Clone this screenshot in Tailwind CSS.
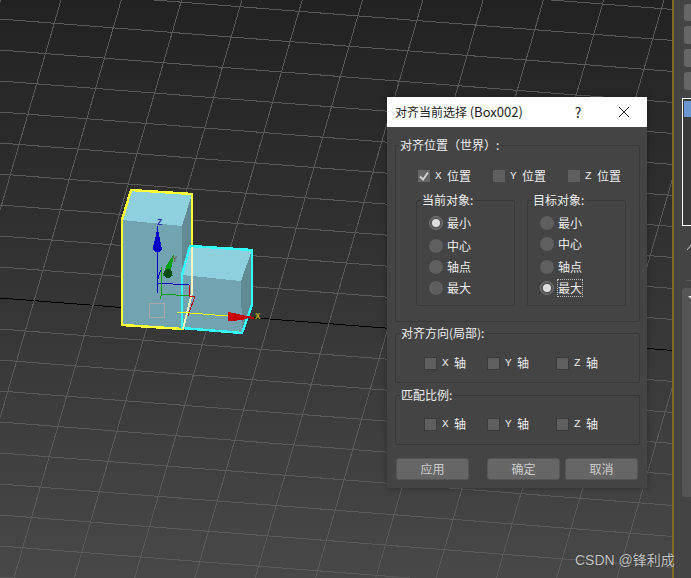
<!DOCTYPE html>
<html lang="zh">
<head>
    <meta charset="UTF-8">
    <title>对齐当前选择</title>
    <script src="https://cdn.jsdelivr.net/npm/@tailwindcss/browser@4"></script>
</head>
<body class="w-[691px] h-[578px] overflow-hidden bg-[#444444] font-['Noto_Sans_CJK_SC',sans-serif] text-[12px] leading-4">
<div class="flex h-full">
    <!-- viewport -->
    <div class="relative w-[672px] h-full shrink-0 overflow-hidden bg-linear-to-b from-[#222222] to-[#484848]">
        <svg id="grid" class="absolute inset-0" width="672" height="578" shape-rendering="crispEdges"></svg>
        <svg class="absolute inset-0" width="672" height="578" shape-rendering="crispEdges" fill="none">
            <!-- yellow box -->
            <polygon points="122,220 182,226 182,329 122,325" fill="#72a3b0"/>
            <polygon points="131,190 192,194 182,226 122,220" fill="#8fd0de"/>
            <polygon points="192,194 182,226 182,329 192,293" fill="#628a94"/>
            <polygon points="122,220 131,190 192,194 192,293 183,329 122,325" stroke="#ffff33" stroke-width="2.500"/>
            <!-- cyan box -->
            <polygon points="182,275 241,281 242,333 182,328" fill="#72a3b0"/>
            <polygon points="190,246 252,250 241,281 182,275" fill="#8fd0de"/>
            <polygon points="252,250 241,281 242,333 252,305" fill="#628a94"/>
            <polygon points="182,275 190,246 252,250 252,305 242,333 182,328" stroke="#33ffff" stroke-width="2.500"/>
            <path d="M192 247V293L183 329" stroke="#f8f4c0" stroke-width="2"/>
            <!-- gizmo -->
            <rect x="149.500" y="303" width="14.500" height="14.500" stroke="#a8a8a8"/>
            <path d="M157.500 250V293M157 282L160.500 270M157.500 283L189 285" stroke="#0000c0"/>
            <path d="M157.500 226L159 235L162 249L160 252H155L152.500 249L156 235Z" fill="#0000c8"/>
            <text x="157" y="225" font-family="Liberation Mono" font-weight="700" font-size="9" fill="#3030b0">Z</text>
            <path d="M161.500 267V294L160 299M162 294L189 296" stroke="#00a000"/>
            <path d="M174 254L171 270L173 276H163L166 266Z" fill="#00a000"/>
            <circle cx="168" cy="273.500" r="4.500" fill="#0a4a0a"/>
            <text x="172" y="262" font-family="Liberation Mono" font-weight="700" font-size="9" fill="#707060">Y</text>
            <path d="M189 285V296M189 296H195L188 316" stroke="#c00000"/>
            <path d="M177 312L228 316" stroke="#ffff00"/>
            <path d="M228 312L234 313L247 316V319L234 321H228Z" fill="#c80000"/>
            <path d="M247 317L254 318" stroke="#c00000" stroke-width="2"/>
            <text x="255" y="319" font-family="Liberation Mono" font-weight="700" font-size="9" fill="#b8b020">X</text>
        </svg>

        <!-- dialog -->
        <div class="absolute left-[387px] top-[97px] w-[260px] h-[391px] bg-[#444444] shadow-[0_0_6px_rgba(0,0,0,0.3)]">
            <div class="flex items-center h-[30px] bg-white pl-2 text-[#1a1a1a]">
                <span class="w-[177px]">对齐当前选择 <span class="text-[13px]">(Box002)</span></span>
                <span class="w-[12px] text-[14px] text-center">?</span>
                <svg class="ml-[34px]" width="12" height="12" viewBox="0 0 12 12" fill="none" stroke="#222" stroke-width="1"><path d="M1 1L11 11M11 1L1 11"/></svg>
            </div>
            <div class="pl-2 pt-[10px] text-[#eeeeee]">
                <fieldset class="w-[245px] h-[185px] border border-[#383838] rounded-[2px]">
                    <legend class="ml-[3px] px-[1px]">对齐位置（世界）:</legend>
                    <div class="flex pt-[15px] pl-[22px]">
                        <div class="flex items-center w-[75px]">
                            <span class="flex items-center justify-center w-3 h-3 bg-[#666666] mr-[5px]">
                                <svg width="12" height="12" viewBox="0 0 12 12" fill="none" stroke="#d0d0d0" stroke-width="2"><path d="M2 6.500L5 9.500L10 2.500"/></svg>
                            </span>
                            <span class="w-3 text-[11px] font-['Liberation_Mono',monospace]">X</span>位置
                        </div>
                        <div class="flex items-center w-[75px]">
                            <span class="w-3 h-3 bg-[#5f5f5f] mr-[5px]"></span>
                            <span class="w-3 text-[11px] font-['Liberation_Mono',monospace]">Y</span>位置
                        </div>
                        <div class="flex items-center">
                            <span class="w-3 h-3 bg-[#5f5f5f] mr-[5px]"></span>
                            <span class="w-3 text-[11px] font-['Liberation_Mono',monospace]">Z</span>位置
                        </div>
                    </div>
                    <div class="flex gap-[12px] mt-[8px] pl-[20px]">
                        <fieldset class="w-[99px] h-[114px] border border-[#383838] rounded-[2px]">
                            <legend class="ml-[4px] px-[1px]">当前对象:</legend>
                            <div class="flex flex-col pl-3 pt-[7px]">
                                <div class="flex items-center gap-1 h-4">
                                    <span class="flex items-center justify-center w-[14px] h-[14px] rounded-full bg-[#555555] border border-[#777777]"><span class="w-2 h-2 rounded-full bg-[#dddddd]"></span></span>最小
                                </div>
                                <div class="flex items-center gap-1 h-4 mt-[7px]"><span class="w-[14px] h-[14px] rounded-full bg-[#5f5f5f]"></span>中心</div>
                                <div class="flex items-center gap-1 h-4 mt-[5px]"><span class="w-[14px] h-[14px] rounded-full bg-[#5f5f5f]"></span>轴点</div>
                                <div class="flex items-center gap-1 h-4 mt-[5px]"><span class="w-[14px] h-[14px] rounded-full bg-[#5f5f5f]"></span>最大</div>
                            </div>
                        </fieldset>
                        <fieldset class="w-[99px] h-[114px] border border-[#383838] rounded-[2px]">
                            <legend class="ml-[4px] px-[1px]">目标对象:</legend>
                            <div class="flex flex-col pl-3 pt-[7px]">
                                <div class="flex items-center gap-1 h-4"><span class="w-[14px] h-[14px] rounded-full bg-[#5f5f5f]"></span>最小</div>
                                <div class="flex items-center gap-1 h-4 mt-[5px]"><span class="w-[14px] h-[14px] rounded-full bg-[#5f5f5f]"></span>中心</div>
                                <div class="flex items-center gap-1 h-4 mt-[7px]"><span class="w-[14px] h-[14px] rounded-full bg-[#5f5f5f]"></span>轴点</div>
                                <div class="flex items-center gap-1 h-4 mt-[5px]">
                                    <span class="flex items-center justify-center w-[14px] h-[14px] rounded-full bg-[#555555] border border-[#777777]"><span class="w-2 h-2 rounded-full bg-[#dddddd]"></span></span>
                                    <span class="outline-1 outline-dotted outline-[#bbbbbb]">最大</span>
                                </div>
                            </div>
                        </fieldset>
                    </div>
                </fieldset>

                <fieldset class="w-[245px] h-[58px] mt-[3px] border border-[#383838] rounded-[2px]">
                    <legend class="ml-1 px-[1px]">对齐方向(局部):</legend>
                    <div class="flex pt-[14px] pl-[28px]">
                        <div class="flex items-center w-[63px]"><span class="w-[13px] h-[13px] bg-[#5f5f5f] border border-[#3a3a3a] mr-[5px]"></span><span class="w-3 text-[11px] font-['Liberation_Mono',monospace]">X</span>轴</div>
                        <div class="flex items-center w-[69px]"><span class="w-[13px] h-[13px] bg-[#5f5f5f] border border-[#3a3a3a] mr-[5px]"></span><span class="w-3 text-[11px] font-['Liberation_Mono',monospace]">Y</span>轴</div>
                        <div class="flex items-center"><span class="w-[13px] h-[13px] bg-[#5f5f5f] border border-[#3a3a3a] mr-[5px]"></span><span class="w-3 text-[11px] font-['Liberation_Mono',monospace]">Z</span>轴</div>
                    </div>
                </fieldset>

                <fieldset class="w-[245px] h-[58px] mt-1 border border-[#383838] rounded-[2px]">
                    <legend class="ml-1 px-[1px]">匹配比例:</legend>
                    <div class="flex pt-[13px] pl-[28px]">
                        <div class="flex items-center w-[63px]"><span class="w-[13px] h-[13px] bg-[#5f5f5f] border border-[#3a3a3a] mr-[5px]"></span><span class="w-3 text-[11px] font-['Liberation_Mono',monospace]">X</span>轴</div>
                        <div class="flex items-center w-[69px]"><span class="w-[13px] h-[13px] bg-[#5f5f5f] border border-[#3a3a3a] mr-[5px]"></span><span class="w-3 text-[11px] font-['Liberation_Mono',monospace]">Y</span>轴</div>
                        <div class="flex items-center"><span class="w-[13px] h-[13px] bg-[#5f5f5f] border border-[#3a3a3a] mr-[5px]"></span><span class="w-3 text-[11px] font-['Liberation_Mono',monospace]">Z</span>轴</div>
                    </div>
                </fieldset>

                <div class="flex mt-[13px] ml-[1px] text-[#cccccc]">
                    <button class="w-[73px] h-[22px] bg-[#666666] border border-[#555555] rounded-[3px]">应用</button>
                    <button class="w-[73px] h-[22px] ml-[18px] bg-[#666666] border border-[#555555] rounded-[3px]">确定</button>
                    <button class="w-[73px] h-[22px] ml-[5px] bg-[#666666] border border-[#555555] rounded-[3px]">取消</button>
                </div>
            </div>
        </div>
    </div>

    <!-- right command panel -->
    <div class="flex-1 min-w-0 h-full border-l-2 border-[#7f6a25] overflow-hidden">
        <div class="flex flex-col gap-[5px] pl-[10px] pt-[4px]">
            <div class="w-[20px] h-[17px] shrink-0 bg-[#666666] rounded-[3px]"></div>
            <div class="w-[20px] h-[18px] shrink-0 bg-[#666666] rounded-[3px]"></div>
            <div class="w-[20px] h-[18px] shrink-0 bg-[#666666] rounded-[3px]"></div>
            <div class="w-[20px] h-[18px] shrink-0 bg-[#666666] rounded-[3px]"></div>
        </div>
        <div class="w-[20px] h-[128px] mt-2 ml-2 border border-white border-r-0 bg-[#3a3a3a] pt-[2px] pl-[1px]">
            <div class="h-4 bg-[#6b97d0]"></div>
        </div>
        <svg class="ml-[13px] mt-[18px]" width="5" height="6" viewBox="0 0 5 6" fill="none" stroke="#cccccc"><path d="M0 6L5 0"/></svg>
        <div class="h-px mt-[30px] ml-3 bg-[#5a5a5a]"></div>
        <div class="relative h-[209px] mt-[7px] ml-2 bg-[#555555] rounded-tl-[3px] rounded-bl-[3px]">
            <span class="absolute left-[6px] top-2 w-0 h-0 border-x-[4px] border-x-transparent border-t-[4px] border-t-[#dddddd]"></span>
        </div>
    </div>
</div>

<!-- watermark -->
<div class="absolute left-[575px] top-[551px] text-[14px] leading-[18px] text-[#c4c4c4] font-['Liberation_Sans','Noto_Sans_CJK_SC',sans-serif] [text-shadow:0_0_1px_#222222]">CSDN @锋利成</div>

<script>
    // viewport grid, drawn from the perspective slopes measured on the picture
    const grid = document.getElementById('grid');
    function line(x1, y1, x2, y2, color) {
        const l = document.createElementNS('http://www.w3.org/2000/svg', 'line');
        l.setAttribute('x1', x1); l.setAttribute('y1', y1);
        l.setAttribute('x2', x2); l.setAttribute('y2', y2);
        l.setAttribute('stroke', color);
        grid.appendChild(l);
    }
    for (let k = 0; k < 21; k++) {
        const c = -43 + 31 * k;
        line(0, c, 672, c + 672 * 0.078, c === 298 ? '#000000' : '#5a5a5a');
    }
    for (let k = -1; k < 14; k++) {
        const x0 = 61 + 60.3 * k;
        line(x0, 0, x0 - 578 * 0.29, 578, '#5a5a5a');
    }
</script>
</body>
</html>
